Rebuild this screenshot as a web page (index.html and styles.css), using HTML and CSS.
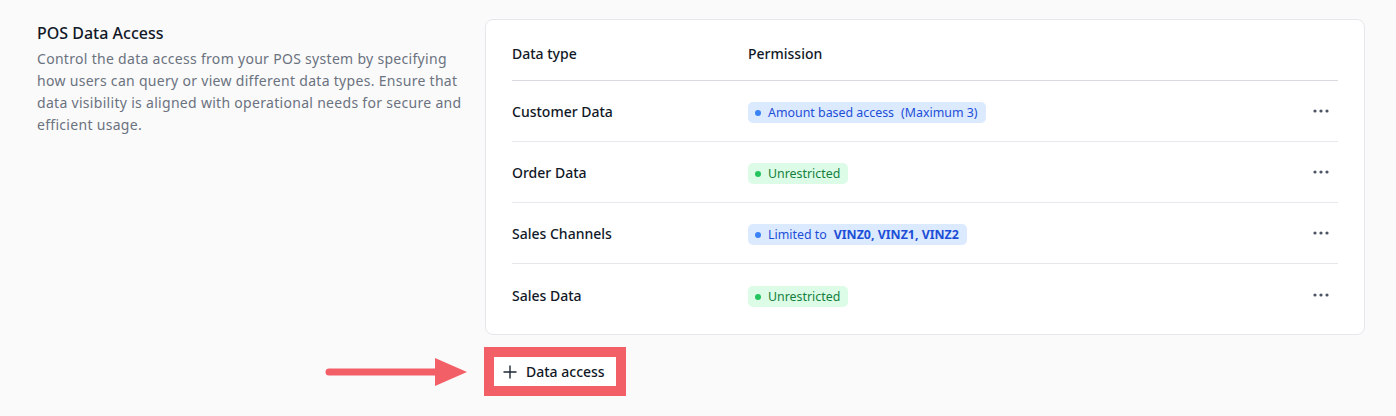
FILE: index.html
```html
<!DOCTYPE html>
<html lang="en">
<head>
<meta charset="utf-8">
<title>POS Data Access</title>
<link rel="stylesheet" href="styles.css">
</head>
<body>
<div class="page">
  <section class="intro">
    <h2 class="title">POS Data Access</h2>
    <p class="desc">Control the data access from your POS system by specifying how users can query or view different data types. Ensure that data visibility is aligned with operational needs for secure and efficient usage.</p>
  </section>
  <section class="main">
    <div class="card">
      <div class="row head">
        <div class="c-type">Data type</div>
        <div class="c-perm">Permission</div>
        <div class="c-act"></div>
      </div>
      <div class="row">
        <div class="c-type name">Customer Data</div>
        <div class="c-perm"><span class="badge blue"><i class="dot"></i>Amount based access<span class="extra">(Maximum 3)</span></span></div>
        <div class="c-act"><svg class="more" width="16" height="4" viewBox="0 0 16 4"><circle cx="2" cy="2" r="1.6"/><circle cx="8" cy="2" r="1.6"/><circle cx="14" cy="2" r="1.6"/></svg></div>
      </div>
      <div class="row">
        <div class="c-type name">Order Data</div>
        <div class="c-perm"><span class="badge green"><i class="dot"></i>Unrestricted</span></div>
        <div class="c-act"><svg class="more" width="16" height="4" viewBox="0 0 16 4"><circle cx="2" cy="2" r="1.6"/><circle cx="8" cy="2" r="1.6"/><circle cx="14" cy="2" r="1.6"/></svg></div>
      </div>
      <div class="row">
        <div class="c-type name">Sales Channels</div>
        <div class="c-perm"><span class="badge blue"><i class="dot"></i>Limited to<b class="extra">VINZ0, VINZ1, VINZ2</b></span></div>
        <div class="c-act"><svg class="more" width="16" height="4" viewBox="0 0 16 4"><circle cx="2" cy="2" r="1.6"/><circle cx="8" cy="2" r="1.6"/><circle cx="14" cy="2" r="1.6"/></svg></div>
      </div>
      <div class="row last">
        <div class="c-type name">Sales Data</div>
        <div class="c-perm"><span class="badge green"><i class="dot"></i>Unrestricted</span></div>
        <div class="c-act"><svg class="more" width="16" height="4" viewBox="0 0 16 4"><circle cx="2" cy="2" r="1.6"/><circle cx="8" cy="2" r="1.6"/><circle cx="14" cy="2" r="1.6"/></svg></div>
      </div>
    </div>
    <div class="actions">
      <div class="highlight">
        <svg class="arrow" width="144" height="30" viewBox="0 0 144 30"><line x1="4" y1="15" x2="112" y2="15" stroke="#f25f66" stroke-width="7" stroke-linecap="round"/><polygon points="110,1 142,15 110,29" fill="#f25f66"/></svg>
        <button class="add-btn" type="button"><svg width="14" height="14" viewBox="0 0 14 14"><path d="M7 0.5V13.5M0.5 7H13.5" stroke="#1f2937" stroke-width="1.4" fill="none"/></svg><span>Data access</span></button>
      </div>
    </div>
  </section>
</div>
</body>
</html>
```

FILE: styles.css
```css
* { box-sizing: border-box; }
html, body { margin: 0; padding: 0; }
body {
  background: #fafafa;
  font-family: "Noto Sans", "Open Sans", sans-serif;
  color: #111827;
  width: 1396px;
  height: 416px;
  overflow: hidden;
}
.page {
  display: flex;
  padding: 19px 0 0 37px;
}
.intro {
  width: 448px;
  flex: none;
  padding-top: 3px;
}
.title {
  margin: 0;
  font-size: 16px;
  font-weight: 500;
  line-height: 22px;
  color: #111827;
}
.desc {
  margin: 4px 0 0;
  font-size: 14px;
  line-height: 22px;
  letter-spacing: 0.3px;
  color: #6b7280;
  width: 425px;
}
.main {
  width: 880px;
  flex: none;
}
.card {
  background: #fff;
  border: 1px solid #e5e7eb;
  border-radius: 8px;
  padding: 6px 26px 8px;
}
.row {
  display: flex;
  align-items: center;
  height: 61px;
  border-bottom: 1px solid #e5e7eb;
  font-size: 14px;
}
.row.head {
  height: 55px;
  font-weight: 500;
  border-bottom-color: #d9dbe0;
}
.row.last { border-bottom: none; height: 62px; }
.c-type { width: 236px; flex: none; }
.c-perm { flex: 1; }
.c-act { width: 40px; display: flex; justify-content: flex-end; padding-right: 9px; }
.name { font-weight: 500; color: #111827; }
.badge {
  display: inline-flex;
  align-items: center;
  height: 21px;
  padding: 0 8px 0 7px;
  border-radius: 5px;
  font-size: 12.4px;
  line-height: 21px;
  position: relative;
  top: 1px;
}
.badge .dot {
  width: 6px;
  height: 6px;
  border-radius: 50%;
  margin-right: 7px;
}
.badge .extra { margin-left: 7px; }
.badge b { font-weight: 700; }
.blue { background: #dbeafe; color: #1d4ed8; }
.blue .dot { background: #3b82f6; }
.green { background: #dcfce7; color: #15803d; }
.green .dot { background: #22c55e; }
.more { fill: #4b5563; }
.actions {
  display: flex;
  margin-top: 12px;
  margin-left: -1px;
}
.highlight {
  position: relative;
  border: 10px solid #f25f66;
}
.arrow {
  position: absolute;
  left: -169px;
  top: 0px;
}
.add-btn {
  display: flex;
  align-items: center;
  gap: 9px;
  height: 29px;
  padding: 0 11px 0 9px;
  background: #fff;
  border: none;
  font-family: inherit;
  font-size: 14px;
  font-weight: 500;
  color: #111827;
}
```
